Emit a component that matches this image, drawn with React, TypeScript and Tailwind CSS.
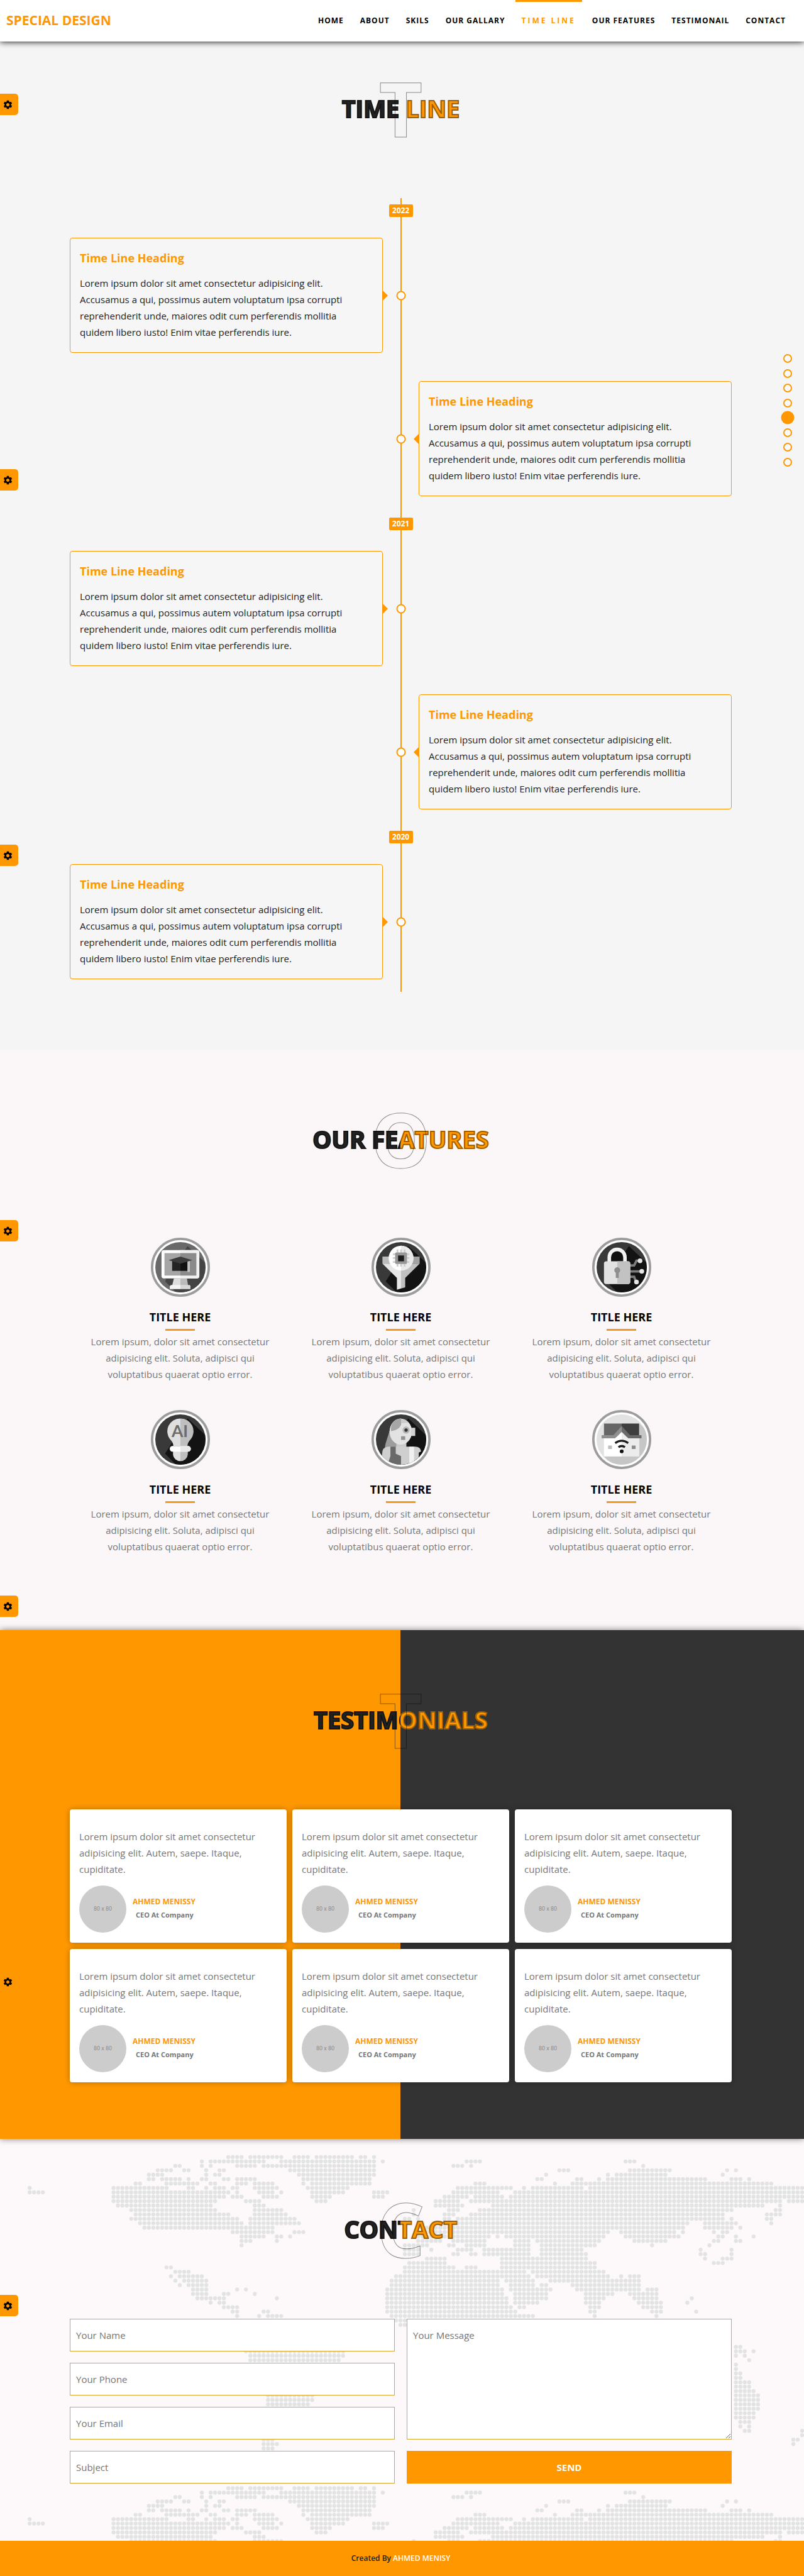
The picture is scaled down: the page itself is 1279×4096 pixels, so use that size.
import React from "react";
import { MdSettings } from "react-icons/md";

const NAV = ["HOME", "ABOUT", "SKILS", "OUR GALLARY", "TIME LINE", "OUR FEATURES", "TESTIMONAIL", "CONTACT"];
const ACTIVE = "TIME LINE";

/* Dotted world map: for each row, the runs of dots as "first-last" columns. */
const MAP_ROWS: Record<number, string> = {
  0: "45-48 50-57 60-63 65-73 75-76 78",
  1: "39 41-53 57-78 80 99-102 135-137",
  2: "33-34 39 41 47-51 53-78 96-98 100 139",
  3: "29-32 35-36 40 43-44 59-78 120-122 136-145 158 160",
  4: "27-30 40 42-43 61-78 117 131 133-144 157",
  5: "27-28 30-34 36 39-40 44-45 47-51 62-77 115-116 124-125 129 131-153 159-161 163",
  6: "24-25 31-38 41-42 47-49 51-55 62 64-77 101-103 119 123-168",
  7: "0 19-31 36-37 40 42-44 46-47 51-56 63-72 97-109 112 114-125 127-175",
  8: "0-3 19-45 47 52-55 57 64-71 78-81 96-106 110-175",
  9: "19-44 46-48 53-56 64-68 78-80 94-99 101-107 109-175",
  10: "19-42 49-52 65-67 92-97 100-170 172-175",
  11: "20-41 51-53 92-98 105-166 170",
  12: "23-42 51-57 87 95-97 102-159 169-170",
  13: "24-45 51-58 87 94-96 100-157 167-170",
  14: "23-47 50-60 85-86 88 94-95 97-157 159 167-168",
  15: "25-48 50-61 85-86 88-89 93-149 153-160 168",
  16: "26-55 88-90 92-148 153-159 161",
  17: "46-55 60-62 89-131 134-146 148 155 157-158",
  18: "48-53 56-57 59 88-104 106 108-130 135-147 156-157 160 164",
  19: "48-50 56 88-93 96-103 110-113 115-129 137-144 155-156 160-161",
  20: "48 85-90 95-96 99-103 110-113 116-128 141 154",
  21: "85-88 91 97-100 103-113 116-125 152 159",
  22: "85-88 96-97 100-101 103-113 116-126 152-153 159",
  23: "90-94 107-126 153 157-159",
  24: "86-94 107-128 155-157",
  25: "31-32 85-96 99-101 107-128",
  26: "33-36 85-112 114-130",
  27: "32 34-39 83-113 115-131 134 136-138",
  28: "33 35-40 82-106 108-114 118-138",
  29: "34 36-40 82-106 109-114 116-117 123-138",
  30: "37-40 47 49 81-107 109-118 124-138 140-142",
  31: "37-40 44-45 51 81-107 110-117 126-132 136-142",
  32: "38-44 56 81-108 110-117 126-130 137-142 150",
  33: "41 43-44 81-108 110-115 126-129 138-143 149",
  34: "44-47 81-109 111-112 127-129 139-143",
  35: "46-47 53-54 81-110 127-128 141-143 151",
  36: "47 52 54-57 82-114 128 142",
  37: "83-85",
  38: "84-85",
  43: "160-161",
  44: "49-71 160-162 164",
  45: "50-71 160 162",
  46: "50-70 163",
  47: "160",
  48: "160",
  49: "160-161",
  50: "160-161",
  51: "160-163",
  52: "160-163",
  53: "160-164",
  54: "54-64 160-165",
  55: "54-64 160-165",
  56: "54-63 160-165",
  57: "160-165",
  58: "160-164",
  59: "160-164",
  60: "161-163",
  61: "161 163",
  62: "162-163 175",
  63: "175",
  64: "53-55 173-174",
  65: "53-56 173",
  66: "53-55",
};

const MAP_PATH = Object.entries(MAP_ROWS)
  .flatMap(([row, runs]) =>
    runs.split(" ").map((run) => {
      const [a, b = a] = run.split("-").map(Number);
      return `M${a} ${row}h${b - a + 0.05}`;
    }),
  )
  .join("");

function WorldMap() {
  return (
    <svg
      aria-hidden="true"
      className="absolute inset-0 h-full w-full"
      viewBox="0 0 182.3 91"
      preserveAspectRatio="xMidYMin slice"
      fill="none"
      stroke="#e2e3e3"
      strokeWidth="0.9"
      strokeLinecap="round"
      strokeDasharray="0 1"
    >
      <path d={MAP_PATH} transform="translate(6.8 4.1)" />
      <path d={MAP_PATH} transform="translate(6.8 79.1)" />
    </svg>
  );
}

function SectionTitle({ children }: { children: string }) {
  return (
    <h2 className="grid place-items-center text-center leading-none">
      <span className="bg-[linear-gradient(90deg,#222_50%,#ff9800_50%)] bg-clip-text text-[38px] font-bold text-transparent [grid-area:1/1] [-webkit-text-stroke:2px_rgba(0,0,0,0.4)]">
        {children}
      </span>
      <span
        aria-hidden="true"
        className="text-[120px] font-bold text-transparent [grid-area:1/1] [-webkit-text-stroke:1px_rgba(0,0,0,0.45)]"
      >
        {children[0]}
      </span>
    </h2>
  );
}

function TimelineCard({ side }: { side: "left" | "right" }) {
  const left = side === "left";
  return (
    <div className="relative grid grid-cols-2 gap-x-[57px]">
      <article
        className={`relative rounded-sm border border-[#ff9800] bg-[#f6f6f6] pt-4 pr-10 pb-[19px] pl-[15px] ${left ? "col-start-1" : "col-start-2"}`}
      >
        <h3 className="mb-3 text-lg leading-[30px] font-bold text-[#ff9800]">Time Line Heading</h3>
        <p className="text-[15px] leading-[26px] text-[#222]">
          Lorem ipsum dolor sit amet consectetur adipisicing elit. Accusamus a qui, possimus autem voluptatum ipsa
          corrupti reprehenderit unde, maiores odit cum perferendis mollitia quidem libero iusto! Enim vitae
          perferendis iure.
        </p>
        <span
          className={`absolute top-1/2 -translate-y-1/2 border-y-[9px] border-y-transparent ${left ? "left-full border-l-[9px] border-l-[#ff9800]" : "right-full border-r-[9px] border-r-[#ff9800]"}`}
        />
      </article>
      <span className="absolute top-1/2 left-1/2 size-[15px] -translate-1/2 rounded-full border-2 border-[#ff9800] bg-white" />
    </div>
  );
}

function Year({ children }: { children: string }) {
  return (
    <p className="relative mx-auto w-[38px] rounded-xs bg-[#ff9800] text-center text-xs leading-5 font-bold text-white">
      {children}
    </p>
  );
}

function Disc({ id, children, bg, shade }: { id: string; children: React.ReactNode; bg: string; shade: string }) {
  return (
    <svg aria-hidden="true" viewBox="0 0 100 100" className="size-[94px]">
      <clipPath id={id}>
        <circle cx="50" cy="50" r="42.5" />
      </clipPath>
      <circle cx="50" cy="50" r="48" fill="#fff" stroke="#9c9c9c" strokeWidth="4" />
      <g clipPath={`url(#${id})`}>
        <path d="M0 0h100v100H0z" fill={bg} />
        <path d="M62 14 100 50v50H50L24 74z" fill={shade} />
        {children}
      </g>
    </svg>
  );
}

const ICONS = [
  <Disc id="learn" bg="#696969" shade="#444">
    <path d="M24 69 50 94h40V40z" fill="#444" />
    <rect x="18" y="21" width="64" height="48" rx="4" fill="#fff" />
    <path d="M50 21h28a4 4 0 0 1 4 4v40a4 4 0 0 1-4 4H50z" fill="#f1f1f1" />
    <path d="M23 26h27v38H23z" fill="#a6a6a6" />
    <path d="M50 26h27v38H50z" fill="#8b8b8b" />
    <path d="M39 69h11v12H36z" fill="#dedede" />
    <path d="M50 69h11l2 12H50z" fill="#bbb" />
    <path d="M34 80h16v7H32v-5z" fill="#f4f4f4" />
    <path d="M50 80h16l1 2v5H50z" fill="#d8d8d8" />
    <path d="M36 39h14v17H36z" fill="#242424" />
    <path d="M50 39h12v17H50z" fill="#111" />
    <path d="M62 39h4v19h-4z" fill="#c4c4c4" />
    <path d="m30 38 20-6 20 6-20 6z" fill="#3c3c3c" />
  </Disc>,
  <Disc id="data" bg="#393939" shade="#131313">
    <path d="M18.5 32H50v12H18.5z" fill="#bcbcbc" />
    <path d="M50 32h31.500v12H50z" fill="#a3a3a3" />
    <path d="M18.500 44H50v42l-7 2V68z" fill="#e6e6e6" />
    <path d="M81.500 44H50v42l7-2V68z" fill="#c1c1c1" />
    <circle cx="50" cy="34.500" r="21" fill="#fff" />
    <path d="M50 13.500a21 21 0 0 1 0 42z" fill="#eaeaea" />
    <path d="M44 20v29M50 20v29M56 20v29M36 28h28M36 34.500h28M36 41h28" stroke="#cfcfcf" strokeWidth="3" />
    <rect x="40" y="25" width="20" height="19.500" rx="2" fill="#979797" />
    <path d="M45 30h10v10H45z" fill="#1c1c1c" />
  </Disc>,
  <Disc id="lock" bg="#393939" shade="#131313">
    <path d="M29 42V33a13 13 0 0 1 26.500 0v9z" fill="#111" />
    <path d="M64 47h7l4-8h5M64 57h18M64 66h7l3 8" fill="none" stroke="#7d7d7d" strokeWidth="4" />
    <circle cx="81" cy="39" r="4" fill="#e6e6e6" />
    <circle cx="84" cy="57" r="4" fill="#e6e6e6" />
    <circle cx="75" cy="75" r="4" fill="#e6e6e6" />
    <path d="M29 42V33a13.250 13.250 0 0 1 26.500 0v9" fill="none" stroke="#f3f3f3" strokeWidth="6" />
    <rect x="20" y="40" width="44.500" height="38.500" rx="4" fill="#e2e2e2" />
    <path d="M42.500 40h18a4 4 0 0 1 4 4v30.500a4 4 0 0 1-4 4h-18z" fill="#c2c2c2" />
    <circle cx="42.500" cy="55" r="5" fill="#8e8e8e" />
    <path d="M40 57h5v11h-5z" fill="#8e8e8e" />
  </Disc>,
  <Disc id="bulb" bg="#393939" shade="#131313">
    <path d="M50 14.500A21.500 21.500 0 0 0 33 50q5 5 5 11h12z" fill="#dfdfdf" />
    <path d="M50 14.500A21.500 21.500 0 0 1 67 50q-5 5-5 11H50z" fill="#bfbfbf" />
    <path d="M37.500 68H50v18.500A12.500 12.500 0 0 1 37.500 75z" fill="#dfdfdf" />
    <path d="M62.500 68H50v18.500A12.500 12.500 0 0 0 62.500 75z" fill="#bfbfbf" />
    <rect x="32" y="61" width="35.500" height="9.500" rx="4.500" fill="#fff" />
    <path d="M50 61h13a4.700 4.700 0 0 1 0 9.500H50z" fill="#e9e9e9" />
    <text x="49" y="46" textAnchor="middle" fontSize="28" fontWeight="700" fill="#6c6c6c" fontFamily="Lato, sans-serif">
      AI
    </text>
  </Disc>,
  <Disc id="robot" bg="#393939" shade="#131313">
    <path d="M50 14q-16 1-19 20l-7 22q-3 10 2 16l16-8 8-20z" fill="#9d9d9d" />
    <path d="M42 54h17v12H42z" fill="#c9c9c9" />
    <ellipse cx="49.500" cy="36.500" rx="19" ry="22" fill="#e2e2e2" />
    <path d="M50 14v11q-3 9-17 11-2-19 17-22z" fill="#a6a6a6" />
    <path d="M50 14.500q8 1 12 7l-12 1z" fill="#ccc" />
    <path d="M67 30h7v14h-7z" fill="#d3d3d3" />
    <circle cx="58.500" cy="34" r="6" fill="#b5b5b5" />
    <circle cx="58.500" cy="34" r="2.800" fill="#333" />
    <path d="M50 44.500h7v6h-7z" fill="#919191" />
    <path d="M28 62h46q9 0 10 8l-4 2v26H18V74q0-11 10-12z" fill="#cfcfcf" />
    <path d="M32 62h9v12l9 4v18H26l6-18z" fill="#696969" />
    <path d="M64 62h8v34h-8z" fill="#f1f1f1" />
  </Disc>,
  <Disc id="home" bg="#e2e2e2" shade="#e2e2e2">
    <path d="M80 23 100 42v58H40L20 78.500h60z" fill="#c6c6c6" />
    <path d="M20 23h30v23H20z" fill="#666" />
    <path d="M50 23h29.500v23H50z" fill="#3f3f3f" />
    <path d="M20 46h30v32.500H20z" fill="#fff" />
    <path d="M50 46h29.500v32.500H50z" fill="#ececec" />
    <path d="m50 27-14 15.500H16V48h23l11-11z" fill="#8f8f8f" />
    <path d="m50 27 14 15.500h19.500V48H61L50 37z" fill="#6a6a6a" />
    <path d="M50 37 39 48h11z" fill="#fff" />
    <path d="M50 37l11 11H50z" fill="#ececec" />
    <path d="M27 60h6.500v6H27z" fill="#bdbdbd" />
    <path d="M67 60h6.500v6H67z" fill="#8d8d8d" />
    <path d="M39 56q11-8 22 0M44.500 63q5.500-4 11 0" fill="none" stroke="#1d1d1d" strokeWidth="3.600" />
    <circle cx="50" cy="70" r="3.200" fill="#111" />
  </Disc>,
];

function Testimonial() {
  return (
    <article className="rounded-sm bg-white px-[15px] pt-[30px] pb-4 shadow-[0_0_10px_rgba(0,0,0,0.3)]">
      <p className="mb-[13px] text-[15px] leading-[26px] text-[#777]">
        Lorem ipsum dolor sit amet consectetur adipisicing elit. Autem, saepe. Itaque, cupiditate.
      </p>
      <div className="flex items-center gap-[10px]">
        <div className="grid size-[75px] place-items-center rounded-full bg-[#ccc] font-['Roboto',sans-serif] text-[9px] text-[#8f8f8f]">
          80 x 80
        </div>
        <div className="pb-1 font-bold">
          <h4 className="text-xs leading-[21px] text-[#ff9800]">AHMED MENISSY</h4>
          <p className="pl-[5px] text-[11px] leading-[21px] text-[#777]">CEO At Company</p>
        </div>
      </div>
    </article>
  );
}

const FIELDS = [
  ["name", "Your Name", "text"],
  ["phone", "Your Phone", "tel"],
  ["email", "Your Email", "email"],
  ["subject", "Subject", "text"],
];

const GEARS = ["top-[149px]", "top-[746px]", "top-[1343px]", "top-[1940px]", "top-[2537px]", "top-[3134px]", "top-[3649px]"];

export default function App() {
  return (
    <div className="relative bg-[#fbf8f8] font-['Open_Sans',sans-serif] text-[15px]">
      <header className="relative z-10 flex h-[66px] items-center justify-between bg-white pr-[19px] pl-[10px] shadow-[0_0_10px_#000]">
        <a href="#home" className="text-[21px] font-bold text-[#ff9800]">
          SPECIAL DESIGN
        </a>
        <nav className="flex h-full gap-[6px]">
          {NAV.map((item) => (
            <a
              key={item}
              href={`#${item.toLowerCase().replace(" ", "-")}`}
              className={
                item === ACTIVE
                  ? "border-t-3 border-[#ff9800] px-[10px] text-xs leading-[60px] font-bold tracking-[3px] text-[#ff9800]"
                  : "border-t-3 border-transparent px-[10px] text-xs leading-[60px] font-bold tracking-[1px] text-black"
              }
            >
              {item}
            </a>
          ))}
        </nav>
      </header>

      <section id="time-line" className="bg-[#f5f5f5] pt-[46px] pr-1 pb-[92px]">
        <SectionTitle>TIME LINE</SectionTitle>
        <div className="relative mx-auto mt-[83px] max-w-[1053px] pt-[10px] pb-5">
          <span className="absolute inset-y-0 left-1/2 w-[2px] -translate-x-1/2 bg-[#ff9800]" />
          {["2022", "2021", "2020"].map((year, i) => (
            <div key={year} className={i < 2 ? "pb-[34px]" : ""}>
              <Year>{year}</Year>
              <div className="mt-[33px] flex flex-col gap-[45px]">
                <TimelineCard side="left" />
                {i < 2 && <TimelineCard side="right" />}
              </div>
            </div>
          ))}
        </div>
      </section>

      <section id="our-features" className="bg-[#fbf7f8] pt-[82px] pr-1 pb-[119px]">
        <SectionTitle>OUR FEATURES</SectionTitle>
        <div className="mx-auto mt-[97px] grid max-w-[1053px] grid-cols-3 gap-y-[43px]">
          {ICONS.map((icon, i) => (
            <article key={i} className="flex flex-col items-center px-[30px] text-center">
              {icon}
              <h4 className="mt-[18px] text-lg leading-7 font-bold text-black">TITLE HERE</h4>
              <span className="mt-[5px] mb-1 h-[3px] w-[47px] bg-[#f29a1d]" />
              <p className="mb-px text-[15px] leading-[26px] text-[#777]">
                Lorem ipsum, dolor sit amet consectetur adipisicing elit. Soluta, adipisci qui voluptatibus quaerat
                optio error.
              </p>
            </article>
          ))}
        </div>
      </section>

      <section
        id="testimonail"
        className="relative z-10 bg-[linear-gradient(90deg,#ff9800_calc(50%-2px),#333_calc(50%-2px))] pt-[82px] pr-1 pb-[90px] shadow-[0_0_10px_rgba(0,0,0,0.5)]"
      >
        <SectionTitle>TESTIMONIALS</SectionTitle>
        <div className="mx-auto mt-[83px] grid max-w-[1053px] grid-cols-3 gap-x-[9px] gap-y-[10px]">
          {Array.from({ length: 6 }, (_, i) => (
            <Testimonial key={i} />
          ))}
        </div>
      </section>

      <section id="contact" className="relative bg-[#fdf9fa] pt-[83px] pr-1 pb-[91px]">
        <WorldMap />
        <div className="relative">
          <SectionTitle>CONTACT</SectionTitle>
          <form className="mx-auto mt-[83px] grid max-w-[1053px] grid-cols-2 gap-x-[19px]">
            <div className="flex flex-col gap-[18px]">
              {FIELDS.map(([name, label, type]) => (
                <input
                  key={name}
                  name={name}
                  type={type}
                  aria-label={label}
                  placeholder={label}
                  className="h-[52px] border border-[#d9a52e] bg-white px-[9px] text-[15px] placeholder:text-[#757575]"
                />
              ))}
            </div>
            <div className="flex flex-col gap-[18px]">
              <textarea
                name="message"
                aria-label="Your Message"
                placeholder="Your Message"
                className="h-48 border border-[#d9a52e] bg-white px-[9px] py-[14px] text-[15px] placeholder:text-[#757575]"
              />
              <button type="submit" className="h-[52px] bg-[#ff9800] text-[15px] font-bold text-white">
                SEND
              </button>
            </div>
          </form>
        </div>
      </section>

      <footer className="relative bg-[#ff9800] pr-1 text-center text-xs leading-[56px] font-semibold text-[#222]">
        Created By{" "}
        <a href="#home" className="text-white">
          AHMED MENISY
        </a>
      </footer>

      {GEARS.map((top) => (
        <button
          key={top}
          type="button"
          aria-label="Settings"
          className={`absolute left-0 z-20 flex h-[34px] w-[29px] items-center rounded-r-[5px] bg-[#ff9800] pl-1 text-black ${top}`}
        >
          <MdSettings size={17} />
        </button>
      ))}

      <nav aria-label="Sections" className="absolute top-[563px] right-[19px] z-20 flex h-[179px] flex-col justify-between">
        {NAV.map((item) => (
          <a
            key={item}
            href={`#${item.toLowerCase().replace(" ", "-")}`}
            aria-label={item}
            className={
              item === ACTIVE
                ? "size-[14px] scale-150 rounded-full bg-[#ff9800]"
                : "size-[14px] rounded-full border-2 border-[#ff9800] bg-white/40"
            }
          />
        ))}
      </nav>
    </div>
  );
}
